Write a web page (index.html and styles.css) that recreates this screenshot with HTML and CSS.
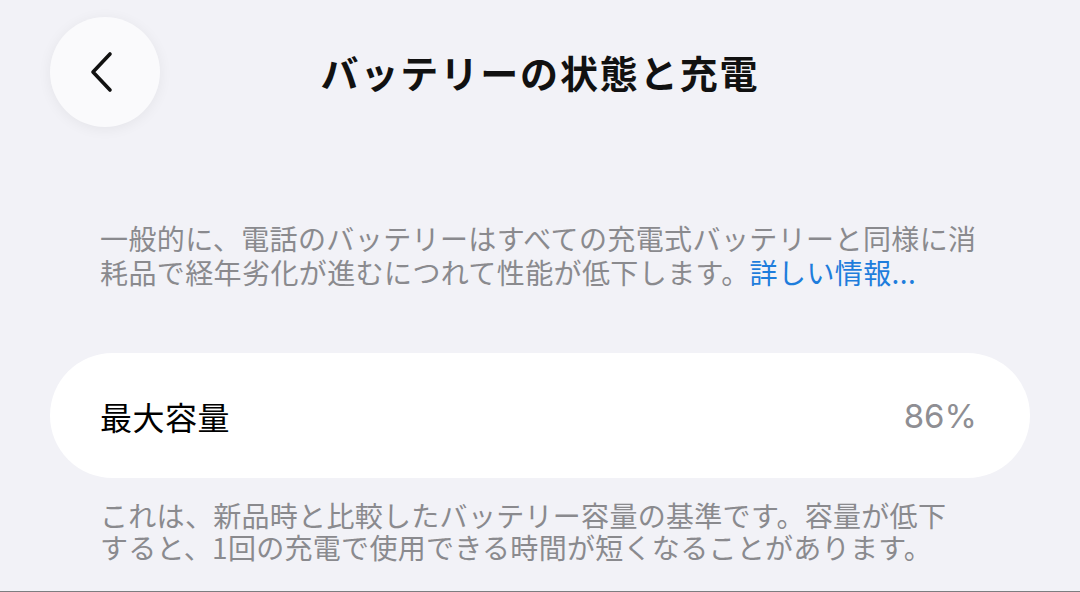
FILE: index.html
```html
<!DOCTYPE html>
<html lang="ja">
<head>
<meta charset="utf-8">
<title>バッテリーの状態と充電</title>
<link rel="stylesheet" href="styles.css">
</head>
<body>
<div class="screen">
  <header class="header">
    <button class="back" aria-label="戻る">
      <svg width="28" height="42" viewBox="0 0 28 42"><path d="M22 3 L5 21 L22 39" fill="none" stroke="#111" stroke-width="3.6" stroke-linecap="round" stroke-linejoin="round"/></svg>
    </button>
    <h1 class="title">バッテリーの状態と充電</h1>
    <div class="spacer"></div>
  </header>
  <p class="note first">一般的に、電話のバッテリーはすべての充電式バッテリーと同様に消<br>耗品で経年劣化が進むにつれて性能が低下します。<a class="link" href="#">詳しい情報...</a></p>
  <div class="card">
    <span class="label">最大容量</span>
    <span class="value">86%</span>
  </div>
  <p class="note second">これは、新品時と比較したバッテリー容量の基準です。容量が低下<br>すると、1回の充電で使用できる時間が短くなることがあります。</p>
</div>
</body>
</html>
```
FILE: styles.css
```css
html, body {
  margin: 0;
  padding: 0;
}
body {
  background: #f2f2f7;
  font-family: "Noto Sans CJK JP", "Noto Sans", sans-serif;
}
.screen {
  height: 591px;
  border-bottom: 1px solid #7d7d80;
  overflow: hidden;
  display: flex;
  flex-direction: column;
}
.header {
  display: grid;
  grid-template-columns: 1fr auto 1fr;
  align-items: center;
  padding: 17px 50px 0;
}
.back {
  width: 110px;
  height: 110px;
  border-radius: 50%;
  border: none;
  background: #fafafc;
  box-shadow: 0 2px 14px rgba(0,0,0,0.06);
  display: flex;
  align-items: center;
  justify-content: center;
  padding: 0 6px 0 0;
}
.title {
  margin: 0;
  font-size: 38px;
  font-weight: 700;
  color: #111;
  letter-spacing: 1.9px;
  line-height: 1;
}
.note {
  margin: 0 50px;
  padding: 0 50px;
  font-size: 28px;
  line-height: 34px;
  color: #8a8a8e;
  white-space: nowrap;
  letter-spacing: 0.4px;
}
.first {
  margin-top: 94px;
}
.link {
  color: #1e7ddc;
  text-decoration: none;
}
.card {
  margin: 64px 50px 0;
  height: 125px;
  border-radius: 63px;
  background: #ffffff;
  display: flex;
  align-items: center;
  justify-content: space-between;
  padding: 0 53px 0 50px;
}
.label {
  font-size: 32px;
  font-weight: 400;
  color: #000;
  letter-spacing: 0.5px;
}
.value {
  font-family: "Inter", "Noto Sans", sans-serif;
  font-size: 33px;
  color: #8e8e93;
}
.second {
  margin-top: 21px;
  line-height: 32px;
  letter-spacing: 0.3px;
}
```
